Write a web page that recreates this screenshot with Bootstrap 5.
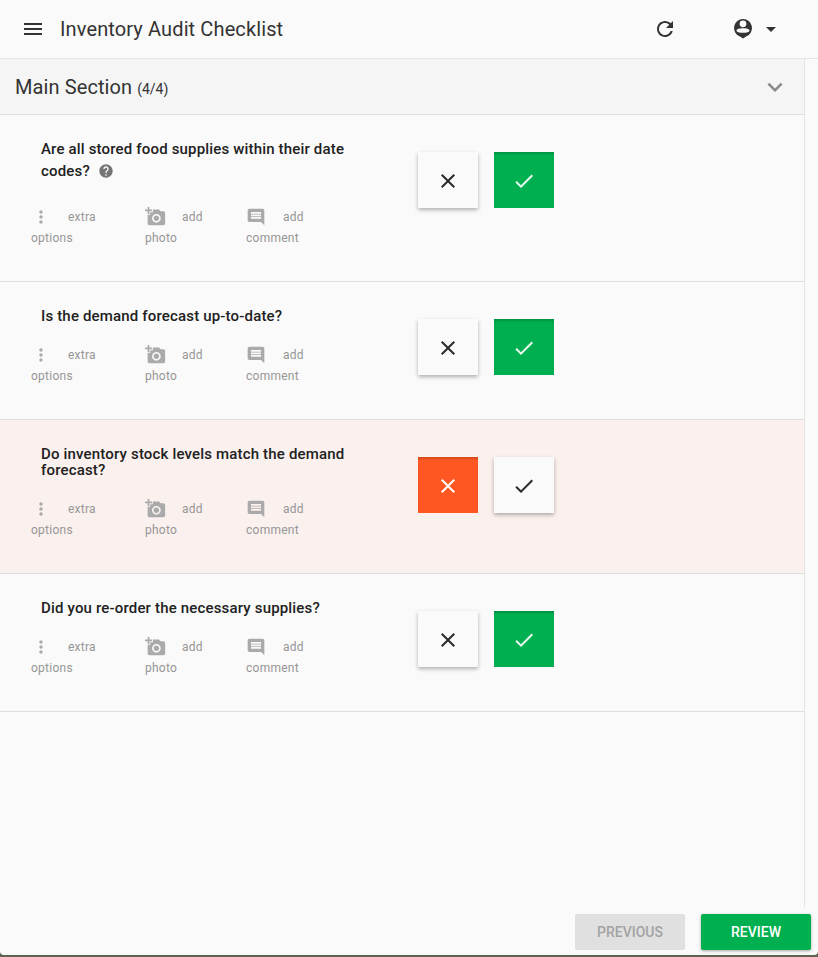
<!DOCTYPE html>
<html lang="en">

<head>
    <meta charset="UTF-8">
    <meta name="viewport" content="width=device-width, initial-scale=1.0">
    <title>Inventory Audit Checklist</title>
    <link href="https://cdn.jsdelivr.net/npm/bootstrap@5.3.0/dist/css/bootstrap.min.css" rel="stylesheet">
    <style>
        body {
            background-color: #5f6152;
            font-family: Roboto, "Liberation Sans", sans-serif;
            color: #212121;
            overflow: hidden;
        }

        .app-shell {
            height: 955px;
            background-color: #fafafa;
            border-radius: 0 0 4px 4px;
        }

        .app-header {
            height: 59px;
            border-bottom: 1px solid #e4e4e4;
        }

        .app-menu {
            margin-left: 21px;
            margin-right: 15px;
        }

        .app-title {
            font-size: 20px;
            font-weight: 400;
            letter-spacing: .12px;
            color: #333;
            margin: 0;
        }

        .app-refresh {
            margin-left: auto;
            margin-right: 54px;
        }

        .app-account {
            margin-right: 35px;
        }

        .app-main {
            width: 805px;
            border-right: 1px solid #e4e4e4;
        }

        .section-head {
            height: 56px;
            background-color: #f5f5f5;
            border-bottom: 1px solid #dedede;
            padding: 0 14px 0 15px;
        }

        .section-name {
            font-size: 20px;
            font-weight: 400;
            letter-spacing: .1px;
            color: #333;
        }

        .section-count {
            font-size: 14px;
            margin-left: 1px;
            color: #333;
        }

        .audit-row {
            display: flex;
            border-bottom: 1px solid #dedede;
            padding: 26px 0 32px;
        }

        .audit-row.is-failed {
            background-color: #faf0ee;
        }

        .audit-left {
            width: 418px;
            flex: none;
        }

        .audit-question {
            font-size: 15px;
            font-weight: 500;
            letter-spacing: .17px;
            line-height: 16px;
            padding-left: 41px;
            width: 355px;
            margin: 0 0 20px;
            color: #212121;
        }

        .audit-question.has-help {
            margin-bottom: 18px;
        }

        .audit-help {
            margin: 6px 0 9px 8px;
            vertical-align: middle;
        }

        .audit-tools {
            font-size: 12px;
            letter-spacing: .25px;
            line-height: 22px;
            color: #969696;
        }

        .tool-options {
            margin-left: 31px;
            width: 114px;
        }

        .tool-photo {
            width: 101px;
        }

        .tool-line {
            display: flex;
            align-items: center;
            height: 21px;
        }

        .tool-line span {
            margin-left: 17px;
        }

        .tool-photo .tool-line span {
            margin-left: 16px;
        }

        .tool-icon {
            flex: none;
        }

        .audit-buttons {
            margin-top: 11px;
            gap: 16px;
        }

        .audit-btn {
            width: 60px;
            height: 56px;
            padding: 2px 0 0;
            border: 0;
            border-radius: 0;
            background-color: #fafafa;
            box-shadow: 0 2px 4px rgba(0, 0, 0, .3);
            display: flex;
            align-items: center;
            justify-content: center;
        }

        .audit-btn.is-yes {
            background-color: #00b050;
            box-shadow: inset 0 2px 2px rgba(0, 0, 0, .16);
        }

        .audit-btn.is-no {
            background-color: #ff5722;
            box-shadow: inset 0 2px 2px rgba(0, 0, 0, .16);
        }

        .app-footer {
            height: 47px;
            padding: 6px 7px 0 0;
            gap: 16px;
        }

        .footer-btn {
            width: 110px;
            height: 36px;
            border: 0;
            border-radius: 2px;
            padding: 0;
            font-size: 14px;
            font-weight: 500;
        }

        .footer-btn.is-off {
            background-color: #e0e0e0;
            color: #a3a3a3;
        }

        .footer-btn.is-on {
            background-color: #00b050;
            color: #fff;
            box-shadow: 0 1px 3px rgba(0, 0, 0, .35);
        }
    </style>
</head>

<body>
    <svg width="0" height="0" class="d-none">
        <symbol id="i-close" viewBox="0 0 24 24"><path d="M19 6.41L17.59 5 12 10.59 6.41 5 5 6.41 10.59 12 5 17.59 6.41 19 12 13.41 17.59 19 19 17.59 13.41 12z"/></symbol>
        <symbol id="i-check" viewBox="0 0 24 24"><path d="M9 16.17L4.83 12l-1.42 1.41L9 19 21 7l-1.41-1.41z"/></symbol>
        <symbol id="i-more" viewBox="0 0 24 24"><path d="M12 8c1.1 0 2-.9 2-2s-.9-2-2-2-2 .9-2 2 .9 2 2 2zm0 2c-1.1 0-2 .9-2 2s.9 2 2 2 2-.9 2-2-.9-2-2-2zm0 6c-1.1 0-2 .9-2 2s.9 2 2 2 2-.9 2-2-.9-2-2-2z"/></symbol>
        <symbol id="i-photo" viewBox="0 0 24 24"><path d="M3 4V1h2v3h3v2H5v3H3V6H0V4h3zm3 6V7h3V4h7l1.83 2H21c1.1 0 2 .9 2 2v12c0 1.1-.9 2-2 2H5c-1.1 0-2-.9-2-2V10h3zm7 9c2.76 0 5-2.24 5-5s-2.24-5-5-5-5 2.24-5 5 2.24 5 5 5zm-3.2-5c0 1.77 1.43 3.2 3.2 3.2s3.2-1.43 3.2-3.2-1.43-3.2-3.2-3.2-3.2 1.43-3.2 3.2z"/></symbol>
        <symbol id="i-comment" viewBox="0 0 24 24"><path d="M21.99 4c0-1.1-.89-2-1.99-2H4c-1.1 0-2 .9-2 2v12c0 1.1.9 2 2 2h14l4 4-.01-18zM18 14H6v-2h12v2zm0-3H6V9h12v2zm0-3H6V6h12v2z"/></symbol>
    </svg>

    <div class="app-shell d-flex flex-column">
        <header class="app-header d-flex align-items-center">
            <svg class="app-menu" width="24" height="24" viewBox="0 0 24 24" fill="#333"><path d="M3 18h18v-2H3v2zm0-5h18v-2H3v2zm0-7v2h18V6H3z"/></svg>
            <h1 class="app-title">Inventory Audit Checklist</h1>
            <svg class="app-refresh" width="24" height="24" viewBox="0 0 24 24" fill="#333"><path d="M17.65 6.35C16.2 4.9 14.21 4 12 4c-4.42 0-7.99 3.58-7.99 8s3.57 8 7.99 8c3.73 0 6.84-2.55 7.73-6h-2.08c-.82 2.33-3.04 4-5.65 4-3.31 0-6-2.69-6-6s2.69-6 6-6c1.66 0 3.14.69 4.22 1.78L13 11h7V4l-2.35 2.35z"/></svg>
            <div class="app-account d-flex align-items-center">
                <svg width="24" height="24" viewBox="0 0 24 24" fill="#333" fill-rule="evenodd"><path d="M12 2a9 9 0 0 1 3.5 17.3L12 21.5l-3.5-2.2A9 9 0 0 1 12 2z M12 3.4a3.4 3.4 0 1 0 0 6.8a3.4 3.4 0 1 0 0-6.8z M5.5 13.5c0-1.5 3-2.3 6.5-2.3s6.5.8 6.5 2.3-3 2.3-6.5 2.3-6.5-.8-6.5-2.3z"/></svg>
                <svg width="24" height="24" viewBox="0 0 24 24" fill="#333" class="ms-1"><path d="M7 10l5 5 5-5z"/></svg>
            </div>
        </header>

        <main class="app-main flex-grow-1">
            <div class="section-head d-flex align-items-center justify-content-between">
                <div><span class="section-name">Main Section</span> <span class="section-count">(4/4)</span></div>
                <svg width="30" height="30" viewBox="0 0 24 24" fill="#8a8a8a"><path d="M16.59 8.59L12 13.17 7.41 8.59 6 10l6 6 6-6z"/></svg>
            </div>

            <div id="audit-list"></div>
        </main>

        <footer class="app-footer d-flex justify-content-end">
            <button class="btn footer-btn is-off" type="button">PREVIOUS</button>
            <button class="btn footer-btn is-on" type="button">REVIEW</button>
        </footer>
    </div>

    <script src="https://cdn.jsdelivr.net/npm/bootstrap@5.3.0/dist/js/bootstrap.bundle.min.js"></script>
    <script>
        const items = [
            { text: 'Are all stored food supplies within their date codes?', help: true, ok: true },
            { text: 'Is the demand forecast up-to-date?', ok: true },
            { text: 'Do inventory stock levels match the demand forecast?', ok: false },
            { text: 'Did you re-order the necessary supplies?', ok: true }
        ];

        function icon(name, size, fill, cls) {
            return `<svg width="${size}" height="${size}" fill="${fill}" class="${cls || ''}"><use href="#i-${name}"/></svg>`;
        }

        document.getElementById('audit-list').innerHTML = items.map(item => `
            <div class="audit-row ${item.ok ? '' : 'is-failed'}">
                <div class="audit-left">
                    <p class="audit-question ${item.help ? 'has-help' : ''}">${item.text}${item.help ? '<svg class="audit-help" width="16" height="16" viewBox="0 0 24 24" fill="#757575"><path d="M12 2C6.48 2 2 6.48 2 12s4.48 10 10 10 10-4.48 10-10S17.52 2 12 2zm1 17h-2v-2h2v2zm2.07-7.75l-.9.92C13.45 12.9 13 13.5 13 15h-2v-.5c0-1.1.45-2.1 1.17-2.83l1.24-1.26c.37-.36.59-.86.59-1.41 0-1.1-.9-2-2-2s-2 .9-2 2H8c0-2.21 1.79-4 4-4s4 1.79 4 4c0 .88-.36 1.68-.93 2.25z"/></svg>' : ''}</p>
                    <div class="audit-tools d-flex">
                        <div class="tool-options">
                            <div class="tool-line">${icon('more', 20, '#aaa', 'tool-icon')}<span>extra</span></div>
                            options
                        </div>
                        <div class="tool-photo">
                            <div class="tool-line">${icon('photo', 21, '#aaa', 'tool-icon')}<span>add</span></div>
                            photo
                        </div>
                        <div>
                            <div class="tool-line">${icon('comment', 20, '#aaa', 'tool-icon')}<span>add</span></div>
                            comment
                        </div>
                    </div>
                </div>
                <div class="audit-buttons d-flex align-items-start">
                    <button class="audit-btn ${item.ok ? '' : 'is-no'}" type="button" aria-label="No">${icon('close', 24, item.ok ? '#2a2a2a' : '#fff')}</button>
                    <button class="audit-btn ${item.ok ? 'is-yes' : ''}" type="button" aria-label="Yes">${icon('check', 24, item.ok ? '#eaf8f0' : '#2a2a2a')}</button>
                </div>
            </div>`).join('');
    </script>
</body>

</html>
